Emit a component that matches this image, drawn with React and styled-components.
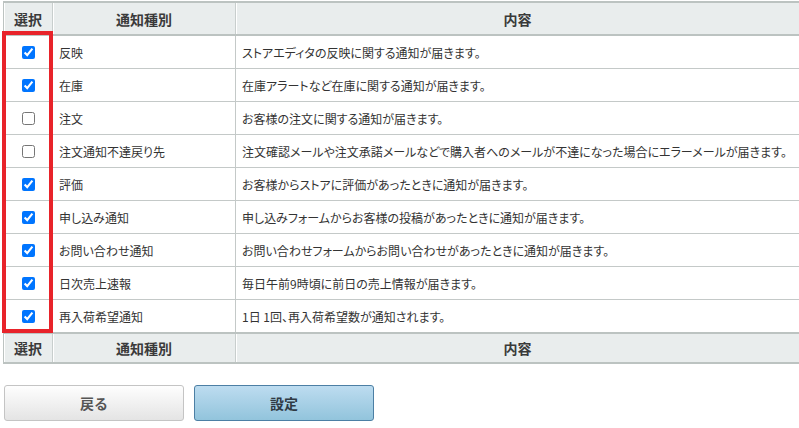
import React from "react";
import styled, { createGlobalStyle } from "styled-components";

const Global = createGlobalStyle`
  html, body { margin: 0; padding: 0; background: #fff; }
  body {
    font-family: "Noto Sans CJK JP", "Noto Sans", sans-serif;
    color: #333;
    overflow: hidden;
  }
`;

const Page = styled.div`
  width: 799px;
  height: 428px;
  padding: 1px 0 0 3px;
  box-sizing: border-box;
  overflow: hidden;
`;

const TableWrap = styled.div`
  position: relative;
  width: 796px;
`;

const Table = styled.table`
  width: 796px;
  border-collapse: collapse;
  table-layout: fixed;
  font-feature-settings: "palt";
`;

const HeadRow = styled.tr`
  background: #e9eded;
`;

const HeadCell = styled.th`
  height: ${(p) => p.$h || 31}px;
  padding: 0;
  font-size: 14px;
  font-weight: bold;
  color: #3a3a3a;
  text-align: center;
  border-top: 2px solid #bcc3c1;
  border-bottom: 2px solid #bcc3c1;
  border-left: 1px solid #c8cecd;
  box-shadow: inset 1px 0 0 #fff;
  &:first-child { border-left: 1px solid #bcc3c1; }
  &:last-child { border-right: none; }
`;

const Row = styled.tr`
  background: #fff;
`;

const Cell = styled.td`
  height: 32px;
  padding: 0 0 0 6px;
  font-size: 12px;
  color: #333;
  white-space: nowrap;
  vertical-align: middle;
  border-bottom: 1px solid #c4c9c8;
  border-left: 1px solid #c4c9c8;
  &:first-child { border-left: 1px solid #bcc3c1; }
`;

const CheckCell = styled(Cell)`
  padding: 0;
  text-align: center;
  line-height: 0;
`;

const Check = styled.input.attrs({ type: "checkbox" })`
  width: 13px;
  height: 13px;
  margin: 0;
  vertical-align: middle;
  accent-color: #0075ff;
`;

const Highlight = styled.div`
  position: absolute;
  left: -1px;
  top: 30px;
  width: 51px;
  height: 302px;
  border: 4px solid #e8232a;
  box-sizing: border-box;
  pointer-events: none;
`;

const Buttons = styled.div`
  display: flex;
  gap: 10px;
  margin-top: 21px;
  padding-left: 1px;
`;

const Button = styled.button`
  width: 180px;
  height: 36px;
  border-radius: 3px;
  font-family: "Noto Sans CJK JP", "Noto Sans", sans-serif;
  font-size: 14px;
  font-weight: bold;
  cursor: pointer;
  border: 1px solid ${(p) => (p.$primary ? "#4c7fa4" : "#c4c4c4")};
  color: ${(p) => (p.$primary ? "#2f3a44" : "#555")};
  background: ${(p) =>
    p.$primary
      ? "linear-gradient(#bddcf0, #92c4dc)"
      : "linear-gradient(#fefefe, #e4e4e4)"};
`;

const rows = [
  ["反映", "ストアエディタの反映に関する通知が届きます。", true],
  ["在庫", "在庫アラートなど在庫に関する通知が届きます。", true],
  ["注文", "お客様の注文に関する通知が届きます。", false],
  ["注文通知不達戻り先", "注文確認メールや注文承諾メールなどで購入者へのメールが不達になった場合にエラーメールが届きます。", false],
  ["評価", "お客様からストアに評価があったときに通知が届きます。", true],
  ["申し込み通知", "申し込みフォームからお客様の投稿があったときに通知が届きます。", true],
  ["お問い合わせ通知", "お問い合わせフォームからお問い合わせがあったときに通知が届きます。", true],
  ["日次売上速報", "毎日午前9時頃に前日の売上情報が届きます。", true],
  ["再入荷希望通知", "1日 1回、再入荷希望数が通知されます。", true],
];

function Header({ h }) {
  return (
    <HeadRow>
      <HeadCell $h={h}>選択</HeadCell>
      <HeadCell $h={h}>通知種別</HeadCell>
      <HeadCell $h={h}>内容</HeadCell>
    </HeadRow>
  );
}

export default function App() {
  return (
    <Page>
      <Global />
      <TableWrap>
        <Table>
          <colgroup>
            <col style={{ width: 49 }} />
            <col style={{ width: 183 }} />
            <col />
          </colgroup>
          <thead>
            <Header h={31} />
          </thead>
          <tbody>
            {rows.map(([name, desc, checked]) => (
              <Row key={name}>
                <CheckCell>
                  <Check defaultChecked={checked} />
                </CheckCell>
                <Cell>{name}</Cell>
                <Cell>{desc}</Cell>
              </Row>
            ))}
          </tbody>
          <tfoot>
            <Header h={28} />
          </tfoot>
        </Table>
        <Highlight />
      </TableWrap>
      <Buttons>
        <Button>戻る</Button>
        <Button $primary>設定</Button>
      </Buttons>
    </Page>
  );
}
